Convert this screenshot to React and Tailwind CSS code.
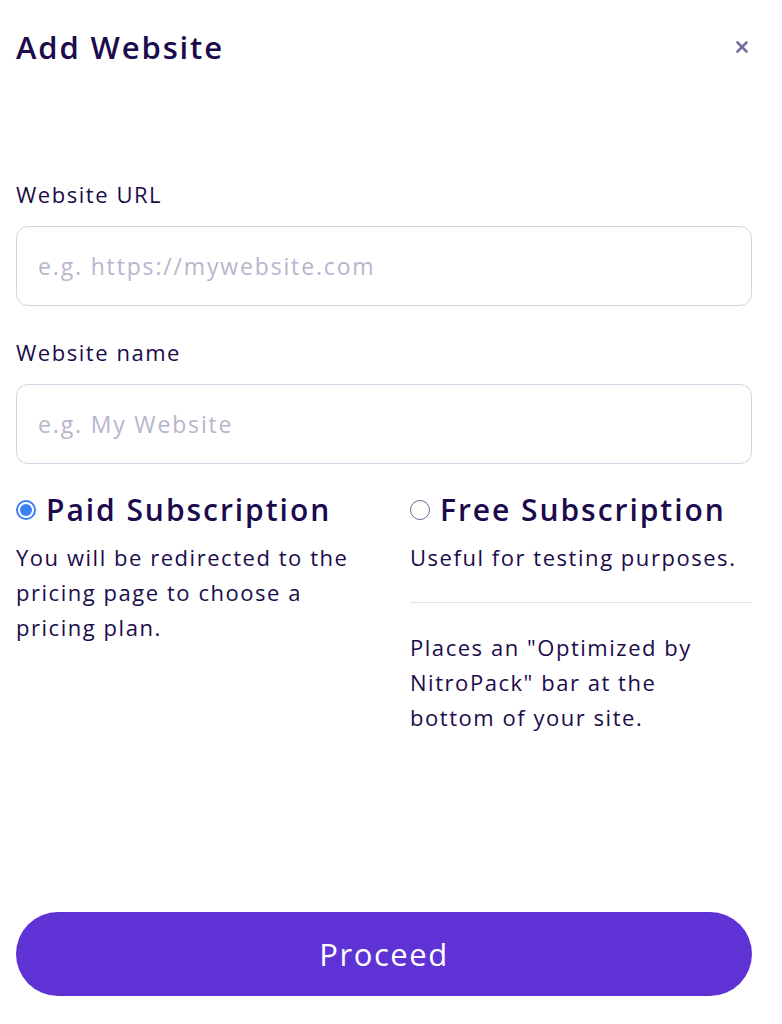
import { X } from "lucide-react";

const Field = ({ label, placeholder, className = "" }) => (
    <div className={className}>
        <label className="block text-[22px] leading-[28px] tracking-[0.07em] text-[#1c0b4c] mb-[18px]">{label}</label>
        <input
            type="text"
            placeholder={placeholder}
            className="w-full h-[80px] rounded-[12px] border border-[#d6d2e3] px-[21px] text-[23px] tracking-[0.08em] text-[#1c0b4c] placeholder:text-[#b9b4cc] outline-none"
        />
    </div>
);

const Radio = ({ checked }) => (
    <span
        className={`w-[20px] h-[20px] rounded-full flex items-center justify-center shrink-0 ${
            checked ? "border-2 border-[#3b82f6]" : "border-[1.5px] border-[#6f6590]"
        }`}
    >
        {checked && <span className="w-[12px] h-[12px] rounded-full bg-[#3b82f6]" />}
    </span>
);

export default function App() {
    return (
        <div className="min-h-screen bg-white flex flex-col pl-4 pr-[30px] pb-[28px] font-['Open_Sans',sans-serif] text-[#1c0b4c]">
            {/* Header */}
            <header className="flex items-center justify-between pt-[28px]">
                <h1 className="text-[31px] leading-[38px] font-semibold tracking-[0.06em]">Add Website</h1>
                <button className="text-[#7b6c9f] mr-[1px]">
                    <X size={18} strokeWidth={3.5} />
                </button>
            </header>

            <Field label="Website URL" placeholder="e.g. https://mywebsite.com" className="mt-[114px]" />
            <Field label="Website name" placeholder="e.g. My Website" className="mt-[32px]" />

            {/* Subscription options */}
            <div className="grid grid-cols-2 gap-x-[52px] mt-[28px]">
                <div>
                    <label className="flex items-center gap-[10px]">
                        <Radio checked />
                        <span className="text-[30px] leading-[36px] font-semibold tracking-[0.065em]">Paid Subscription</span>
                    </label>
                    <p className="mt-[12px] text-[22px] leading-[35px] tracking-[0.07em]">
                        You will be redirected to the pricing page to choose a pricing plan.
                    </p>
                </div>
                <div>
                    <label className="flex items-center gap-[10px]">
                        <Radio />
                        <span className="text-[30px] leading-[36px] font-semibold tracking-[0.065em]">Free Subscription</span>
                    </label>
                    <p className="mt-[12px] text-[22px] leading-[35px] tracking-[0.07em]">Useful for testing purposes.</p>
                    <div className="h-px bg-[#e4e1ee] mt-[27px] mb-[27px]" />
                    <p className="max-w-[305px] text-[22px] leading-[35px] tracking-[0.07em]">
                        Places an "Optimized by NitroPack" bar at the bottom of your site.
                    </p>
                </div>
            </div>

            <button className="mt-auto h-[84px] w-full rounded-full bg-[#5f32d6] text-white text-[31px] tracking-[0.05em]">
                Proceed
            </button>
        </div>
    );
}
